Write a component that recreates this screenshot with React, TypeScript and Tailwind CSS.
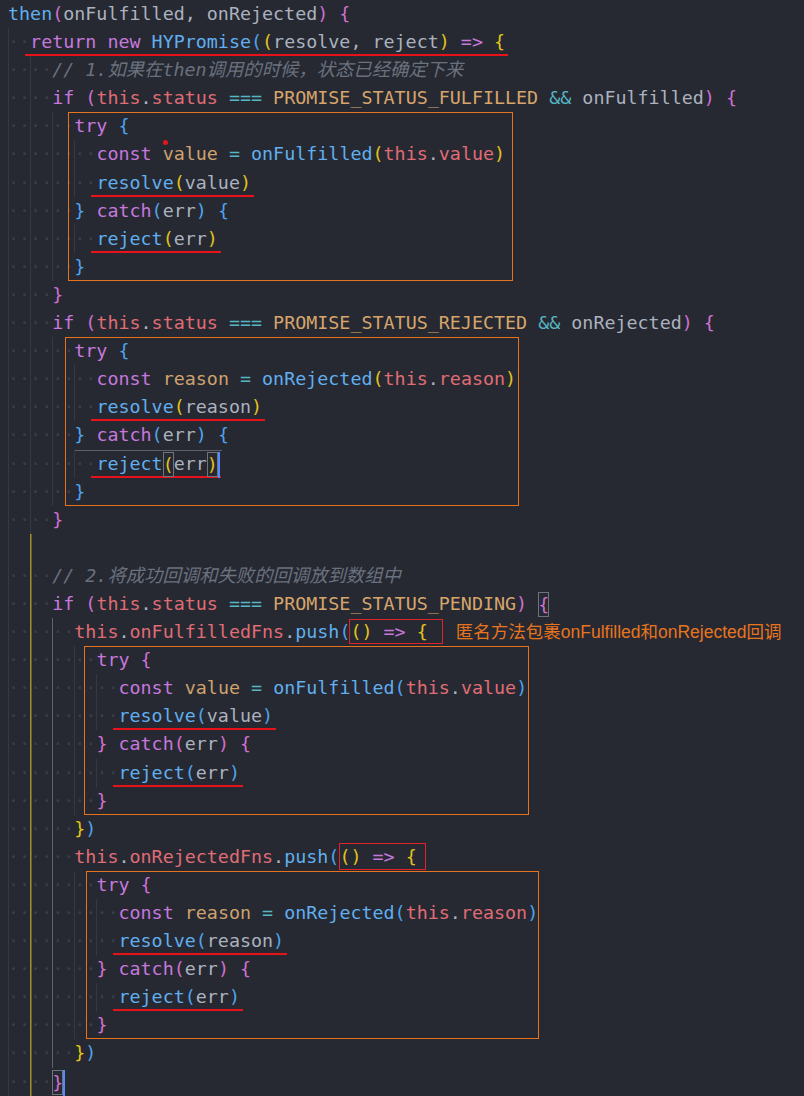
import type { ReactNode } from "react";

const C = {
  k: "text-[#c678dd]",
  f: "text-[#61afef]",
  p: "text-[#abb2bf]",
  t: "text-[#e06c75]",
  o: "text-[#56b6c2]",
  c: "text-[#d7a56b]",
  v: "text-[#cfa26d]",
  m: "text-[#6a717e] italic",
  g: "text-[#e2c21c]",
  r: "text-[#d070cf]",
  b: "text-[#4fa3ea]",
};

type K = keyof typeof C;
type Tok = [K, string, ("box" | "caret" | "dot")?];
type Line = {
  ind: number;
  toks: Tok[];
  ul?: boolean; // red underline drawn in the screenshot
  cur?: boolean; // current line border
  red?: { from: number; cls: string }; // small red frame
  note?: string;
};

function tryBlock(ind: number, br1: K, br2: K, fn: string, arg: string): Line[] {
  return [
    { ind, toks: [["k", "try"], ["p", " "], [br1, "{"]] },
    {
      ind: ind + 2,
      toks: [
        ["k", "const"], ["p", " "], ["v", arg], ["p", " "], ["o", "="], ["p", " "],
        ["f", fn], [br2, "("], ["t", "this"], ["p", "."], ["t", arg], [br2, ")"],
      ],
    },
    { ind: ind + 2, ul: true, toks: [["f", "resolve"], [br2, "("], ["p", arg], [br2, ")"]] },
    {
      ind,
      toks: [[br1, "}"], ["p", " "], ["k", "catch"], [br1, "("], ["p", "err"], [br1, ")"], ["p", " "], [br1, "{"]],
    },
    { ind: ind + 2, ul: true, toks: [["f", "reject"], [br2, "("], ["p", "err"], [br2, ")"]] },
    { ind, toks: [[br1, "}"]] },
  ];
}

function ifLine(status: string, cb?: string, box?: boolean): Line {
  const toks: Tok[] = [
    ["k", "if"], ["p", " "], ["r", "("], ["t", "this"], ["p", "."], ["t", "status"], ["p", " "],
    ["o", "==="], ["p", " "], ["c", status],
  ];
  if (cb) toks.push(["p", " "], ["o", "&&"], ["p", " " + cb]);
  toks.push(["r", ")"], ["p", " "], box ? ["r", "{", "box"] : ["r", "{"]);
  return { ind: 4, toks };
}

function pushLine(name: string, redCls: string, note?: string): Line {
  return {
    ind: 6,
    red: { from: 6, cls: redCls },
    note,
    toks: [
      ["t", "this"], ["p", "."], ["t", name], ["p", "."], ["f", "push"], ["b", "("],
      ["g", "("], ["g", ")"], ["p", " "], ["k", "=>"], ["p", " "], ["g", "{"],
    ],
  };
}

const fulfilled = tryBlock(6, "b", "g", "onFulfilled", "value");
fulfilled[1].toks.splice(2, 0, ["p", "", "dot"]);

const rejected = tryBlock(6, "b", "g", "onRejected", "reason");
rejected[4] = {
  ind: 8,
  ul: true,
  cur: true,
  toks: [["f", "reject"], ["g", "(", "box"], ["p", "err"], ["g", ")", "box"], ["p", "", "caret"]],
};

const lines: Line[] = [
  {
    ind: 0,
    toks: [["f", "then"], ["r", "("], ["p", "onFulfilled, onRejected"], ["r", ")"], ["p", " "], ["r", "{"]],
  },
  {
    ind: 2,
    ul: true,
    toks: [
      ["k", "return"], ["p", " "], ["k", "new"], ["p", " "], ["f", "HYPromise"], ["b", "("], ["g", "("],
      ["p", "resolve, reject"], ["g", ")"], ["p", " "], ["k", "=>"], ["p", " "], ["g", "{"],
    ],
  },
  { ind: 4, toks: [["m", "// 1.如果在then调用的时候，状态已经确定下来"]] },
  ifLine("PROMISE_STATUS_FULFILLED", "onFulfilled"),
  ...fulfilled,
  { ind: 4, toks: [["r", "}"]] },
  ifLine("PROMISE_STATUS_REJECTED", "onRejected"),
  ...rejected,
  { ind: 4, toks: [["r", "}"]] },
  { ind: -4, toks: [] },
  { ind: 4, toks: [["m", "// 2.将成功回调和失败的回调放到数组中"]] },
  ifLine("PROMISE_STATUS_PENDING", undefined, true),
  pushLine(
    "onFulfilledFns",
    "inline-block leading-[25px] outline-solid outline-[1.5px] outline-[#e0222b] outline-offset-[-1.5px] pl-[1px] -ml-[1px] pr-[15px] -mr-[15px]",
    "匿名方法包裹onFulfilled和onRejected回调",
  ),
  ...tryBlock(8, "r", "b", "onFulfilled", "value"),
  { ind: 6, toks: [["g", "}"], ["b", ")"]] },
  pushLine(
    "onRejectedFns",
    "inline-block leading-[27px] outline-solid outline-[1.5px] outline-[#e0222b] outline-offset-[-1.5px] pr-[9px] -mr-[9px]",
  ),
  ...tryBlock(8, "r", "b", "onRejected", "reason"),
  { ind: 6, toks: [["g", "}"], ["b", ")"]] },
  { ind: 4, toks: [["r", "}", "box"], ["p", "", "caret"]] },
];

// orange frames drawn around the try/catch blocks
const frames = [
  { from: 4, to: 9, outer: "ml-[60px] w-[445px]", inner: "-ml-[60px]" },
  { from: 12, to: 17, outer: "ml-[57px] w-[454px]", inner: "-ml-[57px]" },
  { from: 23, to: 28, outer: "ml-[76px] w-[445px]", inner: "-ml-[76px]" },
  { from: 31, to: 36, outer: "ml-[78px] w-[453px]", inner: "-ml-[78px]" },
];

function guideClass(i: number, k: number) {
  if (k === 1 && i >= 19) return "shadow-[inset_1.5px_0_0_#a58f2c]";
  if (k === 2 && i >= 22 && i <= 37) return "shadow-[inset_1px_0_0_#5e626a]";
  return "shadow-[inset_1px_0_0_#353942]";
}

function renderToks(toks: Tok[]) {
  return toks.map(([c, text, extra], j) => {
    if (extra === "caret")
      return <span key={j} className="inline-block w-[2px] h-[26px] -mr-[2px] align-middle bg-[#528bff]" />;
    if (extra === "dot")
      return <span key={j} className="inline-block w-[5px] h-[5px] -mr-[5px] align-top rounded-full bg-[#e8131c]" />;
    if (extra === "box")
      return (
        <span key={j} className={`${C[c]} inline-block leading-[25px] align-middle shadow-[inset_0_0_0_1px_#6f737c]`}>
          {text}
        </span>
      );
    return (
      <span key={j} className={C[c]}>
        {text}
      </span>
    );
  });
}

function CodeLine({ line, i }: { line: Line; i: number }) {
  const blank = line.ind < 0;
  const n = Math.abs(line.ind) / 2;
  const guides = Array.from({ length: n }).map((_, k) => (
    <span key={k} className={`inline-block h-[28.1px] align-top text-[#3a3e47] ${guideClass(i, k)}`}>
      {blank ? "  " : "··"}
    </span>
  ));

  let body: ReactNode = line.red ? (
    <>
      {renderToks(line.toks.slice(0, line.red.from))}
      <span className={line.red.cls}>{renderToks(line.toks.slice(line.red.from))}</span>
    </>
  ) : (
    renderToks(line.toks)
  );
  if (line.ul)
    body = (
      <span className="border-b-[2.5px] border-[#e8121b] pb-[2px] pl-[5px] -ml-[5px] pr-[3px] -mr-[3px]">{body}</span>
    );

  return (
    <div className="h-[28.1px] leading-[28.1px] whitespace-pre">
      {line.cur ? (
        <>
          {guides.slice(0, -1)}
          <span className="inline-block h-[28.1px] align-top pr-[4px] shadow-[inset_1px_1px_0_#5e626b]">
            {guides[guides.length - 1]}
            {body}
          </span>
        </>
      ) : (
        <>
          {guides}
          {body}
        </>
      )}
      {line.note && (
        <span className="ml-[28px] text-[17.5px] text-[#e8741e] font-['Liberation_Sans','Noto_Sans_CJK_SC',sans-serif]">
          {line.note}
        </span>
      )}
    </div>
  );
}

export default function App() {
  const rows: ReactNode[] = [];
  let i = 0;
  while (i < lines.length) {
    const f = frames.find((fr) => fr.from === i);
    if (f) {
      rows.push(
        <div
          key={i}
          className={`${f.outer} outline-solid outline-[1.5px] outline-[#e8731c] outline-offset-[-1.5px]`}
        >
          <div className={`${f.inner} flex flex-col`}>
            {lines.slice(f.from, f.to + 1).map((line, j) => (
              <CodeLine key={j} line={line} i={f.from + j} />
            ))}
          </div>
        </div>,
      );
      i = f.to + 1;
    } else {
      rows.push(<CodeLine key={i} line={lines[i]} i={i} />);
      i++;
    }
  }

  return (
    <div className="w-[804px] h-[1096px] overflow-hidden bg-[#262932] font-['DejaVu_Sans_Mono','Noto_Sans_CJK_SC',monospace] text-[18.35px]">
      <div className="flex flex-col pl-[8px]">{rows}</div>
    </div>
  );
}
